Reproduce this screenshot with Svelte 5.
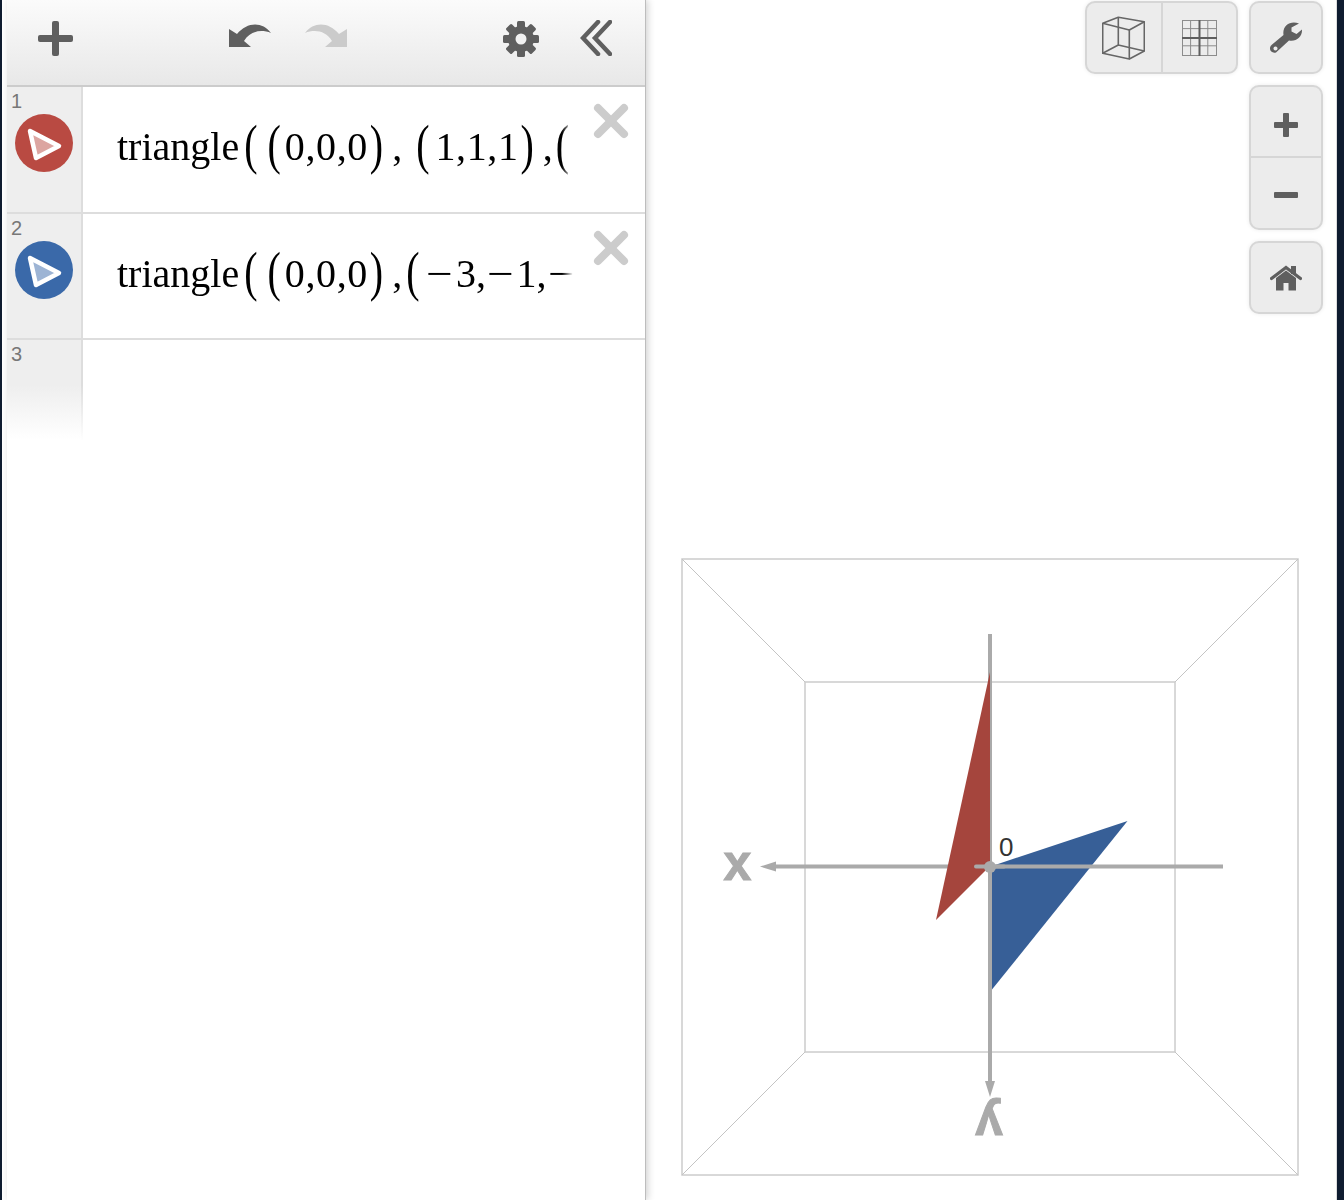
<script>
	const teeth = [0, 45, 90, 135, 180, 225, 270, 315];
	const minor = [8.6, 25.8];
</script>

<div class="page">
	<aside class="sidebar">
		<header class="bar">
			<svg class="plus" viewBox="0 0 35 35" width="35" height="35">
				<rect x="14" y="0" width="7" height="35" rx="2" />
				<rect x="0" y="14" width="35" height="7" rx="2" />
			</svg>
			<svg class="undo" viewBox="229 24 42 23" width="42" height="23">
				<path d="M229 47 L229 29 L237 34 C247 22 262 21 271 33 C261 29 250 31 244 41 L251 47 Z" />
			</svg>
			<svg class="redo" viewBox="229 24 42 23" width="42" height="23">
				<path d="M229 47 L229 29 L237 34 C247 22 262 21 271 33 C261 29 250 31 244 41 L251 47 Z" />
			</svg>
			<svg class="gear" viewBox="0 0 36 36" width="36" height="36">
				<circle cx="18" cy="18" r="13" />
				{#each teeth as deg}
					<rect x="14" y="0" width="8" height="9" rx="1.5" transform="rotate({deg} 18 18)" />
				{/each}
				<circle class="hole" cx="18" cy="18" r="5.5" />
			</svg>
			<svg class="collapse" viewBox="0 0 32 36" width="32" height="36">
				<polyline points="18,2 3,18 18,34" />
				<polyline points="30,2 15,18 30,34" />
			</svg>
		</header>

		<div class="row top-row">
			<div class="gutter">
				<span class="num">1</span>
				<svg class="badge" viewBox="0 0 58 58" width="58" height="58">
					<circle cx="29" cy="29" r="29" fill="#b94a42" />
					<polygon points="15,17 44,32 21,44" />
				</svg>
			</div>
			<div class="cell">
				<div class="math">
					<span>triangle</span><span class="paren first">(</span><span class="paren">(</span><span class="nums">0,0,0</span><span class="paren close">)</span><span class="comma">,</span><span class="paren wide">(</span><span class="nums">1,1,1</span><span class="paren close">)</span><span class="comma">,</span><span class="paren last">(</span>
				</div>
				<svg class="remove" viewBox="0 0 36 36" width="36" height="36">
					<line x1="5" y1="5" x2="31" y2="31" />
					<line x1="31" y1="5" x2="5" y2="31" />
				</svg>
			</div>
		</div>

		<div class="row">
			<div class="gutter">
				<span class="num">2</span>
				<svg class="badge" viewBox="0 0 58 58" width="58" height="58">
					<circle cx="29" cy="29" r="29" fill="#3a69a9" />
					<polygon points="15,17 44,32 21,44" />
				</svg>
			</div>
			<div class="cell">
				<div class="math">
					<span>triangle</span><span class="paren first">(</span><span class="paren">(</span><span class="nums">0,0,0</span><span class="paren close">)</span><span class="comma">,</span><span class="paren open">(</span><span class="op">−</span><span>3,</span><span class="op">−</span><span>1,</span><span class="op">−</span>
				</div>
				<svg class="remove" viewBox="0 0 36 36" width="36" height="36">
					<line x1="5" y1="5" x2="31" y2="31" />
					<line x1="31" y1="5" x2="5" y2="31" />
				</svg>
			</div>
		</div>

		<div class="row empty">
			<div class="gutter">
				<span class="num">3</span>
			</div>
		</div>
	</aside>

	<main class="graph">
		<div class="tools">
			<div class="tool-row">
				<div class="group horizontal">
					<button class="tool wide-tool" aria-label="3D view">
						<svg viewBox="1102 16 43 44" width="43" height="44" class="line-icon">
							<path d="M1102.7 23.3 L1118.3 17.3 L1144.3 21.7 L1129.3 30 Z" />
							<path d="M1102.7 23.3 V53.3 L1129.3 59 V30" />
							<path d="M1144.3 21.7 V51 L1129.3 59" />
							<path d="M1118.3 17.3 V45 L1102.7 53.3 M1118.3 45 L1144.3 51" />
						</svg>
					</button>
					<button class="tool wide-tool" aria-label="Grid">
						<svg viewBox="0 0 35 36" width="35" height="36">
							{#each minor as m}
								<line class="thin" x1={m} y1="0" x2={m} y2="36" />
								<line class="thin" x1="0" y1={m} x2="35" y2={m} />
							{/each}
							<rect class="thin" x="0.5" y="0.5" width="34" height="35" />
							<line class="thick" x1="17.5" y1="0" x2="17.5" y2="36" />
							<line class="thick" x1="0" y1="18" x2="35" y2="18" />
						</svg>
					</button>
				</div>
				<div class="group">
					<button class="tool" aria-label="Settings">
						<svg viewBox="1269 21 34 33" width="34" height="33">
							<path fill-rule="evenodd" d="M1299 23.5 C1291 20 1282 25 1283.5 35 L1271.5 45 C1268 48.5 1271 54 1276 52.5 L1289 40.5 C1296 42 1302.5 37 1302 29.5 L1296.5 34 L1291.5 31.5 L1291.5 27.5 Z M1275.5 46.5 a2 2 0 1 0 0.01 0 Z" />
						</svg>
					</button>
				</div>
			</div>
			<div class="group">
				<button class="tool zoom-in" aria-label="Zoom in">
					<svg viewBox="0 0 24 24" width="24" height="24">
						<rect x="9" y="0" width="6" height="24" rx="1" />
						<rect x="0" y="9" width="24" height="6" rx="1" />
					</svg>
				</button>
				<button class="tool divided" aria-label="Zoom out">
					<svg viewBox="0 0 24 6" width="24" height="6">
						<rect x="0" y="0" width="24" height="6" rx="1" />
					</svg>
				</button>
			</div>
			<div class="group">
				<button class="tool" aria-label="Home">
					<svg viewBox="0 0 32 26" width="32" height="26">
						<rect x="21" y="1" width="5" height="8" />
						<polyline class="roof" points="1.5,13.5 16,2.5 30.5,13.5" />
						<path d="M6 13 L16 5.5 L26 13 V25.5 H18.5 V18 H13.5 V25.5 H6 Z" />
					</svg>
				</button>
			</div>
		</div>

		<svg class="plot" viewBox="680 557 620 620" width="620" height="620">
			<rect class="box" x="682" y="559" width="616" height="616" />
			<rect class="box" x="805" y="682" width="370" height="370" />
			<line class="diag" x1="682" y1="559" x2="805" y2="682" />
			<line class="diag" x1="1298" y1="559" x2="1175" y2="682" />
			<line class="diag" x1="682" y1="1175" x2="805" y2="1052" />
			<line class="diag" x1="1298" y1="1175" x2="1175" y2="1052" />

			<line class="axis" x1="990" y1="866.5" x2="775" y2="866.5" />
			<polygon class="tip" points="760,866.5 776,861.5 776,871.5" />
			<line class="axis" x1="990" y1="634" x2="990" y2="1082" />
			<polygon fill="#a5453d" points="990,672 990,866 936,920" />
			<polygon fill="#375f97" points="1127.5,821 992,989.5 992,866" />
			<line class="axis" x1="990" y1="866.5" x2="1223" y2="866.5" />
			<polygon class="tip" points="990,1097 985,1081 995,1081" />
			<line class="tick" x1="976" y1="866.5" x2="1004" y2="866.5" />
			<circle class="tip" cx="990" cy="867" r="6" />

			<text class="origin" x="999" y="856">0</text>
			<text class="label" x="737.5" y="880" text-anchor="middle">x</text>
			<text class="label" transform="rotate(180 989 1118)" x="989" y="1128" text-anchor="middle">y</text>
		</svg>
	</main>
</div>

<style>
	:global(body) {
		margin: 0;
		background: #fff;
	}
	.page {
		height: 1200px;
		display: flex;
		overflow: hidden;
		box-sizing: border-box;
		border-left: 2px solid #0f1c30;
		border-right: 7px solid #0f1c30;
		background: #fff;
		font-family: "Liberation Sans", Arial, sans-serif;
	}
	.sidebar {
		width: 639px;
		margin-left: 5px;
		flex: none;
		box-sizing: border-box;
		border-right: 1px solid #bdbdbd;
		box-shadow: 2px 0 7px rgba(0, 0, 0, 0.18);
		background: #fff;
		position: relative;
		z-index: 1;
	}
	.bar {
		height: 87px;
		box-sizing: border-box;
		border-bottom: 2px solid #ccc;
		background: linear-gradient(#fbfbfb, #e8e8e8);
		display: flex;
		align-items: flex-start;
		padding-left: 31px;
	}
	.bar svg {
		flex: none;
		fill: #5f5f5f;
	}
	.plus {
		margin-top: 21px;
	}
	.undo {
		margin: 24px 0 0 156px;
	}
	.redo {
		margin: 24px 0 0 34px;
		transform: scaleX(-1);
		fill: #cbcbcb !important;
	}
	.gear {
		margin: 21px 0 0 156px;
	}
	.gear .hole {
		fill: #f1f1f1;
	}
	.collapse {
		margin: 20px 0 0 41px;
	}
	.collapse polyline {
		fill: none;
		stroke: #5f5f5f;
		stroke-width: 4.5;
		stroke-linecap: round;
	}
	.row {
		height: 126px;
		box-sizing: border-box;
		border-bottom: 2px solid #ddd;
		display: flex;
	}
	.top-row {
		height: 127px;
	}
	.gutter {
		width: 76px;
		flex: none;
		box-sizing: border-box;
		border-right: 2px solid #ddd;
		background: #eee;
		position: relative;
	}
	.num {
		position: absolute;
		left: 4px;
		top: 3px;
		font-size: 20px;
		line-height: 23px;
		color: #777;
	}
	.badge {
		position: absolute;
		left: 8px;
		top: 27px;
	}
	.badge polygon {
		fill: rgba(255, 255, 255, 0.5);
		stroke: #fff;
		stroke-width: 4.5;
		stroke-linejoin: round;
	}
	.cell {
		flex: 1;
		position: relative;
		min-width: 0;
	}
	.math {
		position: absolute;
		left: 34px;
		top: 30px;
		width: 456px;
		height: 66px;
		line-height: 60px;
		overflow: hidden;
		white-space: nowrap;
		font-family: "Liberation Serif", "Times New Roman", serif;
		font-size: 40px;
		color: #000;
		mask-image: linear-gradient(to right, #000 445px, transparent 456px);
	}
	.paren {
		display: inline-block;
		transform: translateY(-2px) scaleY(1.36);
	}
	.first {
		margin-left: 5px;
		margin-right: 10px;
	}
	.close {
		margin-left: 2px;
	}
	.comma {
		margin-left: 9px;
	}
	.wide {
		margin-left: 14px;
		margin-right: 2px;
	}
	.open {
		margin-left: 4px;
	}
	.last {
		margin-left: 3px;
	}
	.nums {
		margin-left: 4px;
		letter-spacing: 0.6px;
	}
	.op {
		display: inline-block;
		margin: 0 5px 0 3px;
		transform: scaleX(1.18);
	}
	.open + .op {
		margin-left: 9px;
	}
	.remove {
		position: absolute;
		right: 16px;
		top: 16px;
	}
	.remove line {
		stroke: #ccc;
		stroke-width: 8;
		stroke-linecap: round;
	}
	.empty {
		height: 100px;
		border-bottom: 0;
	}
	.empty .gutter {
		height: 100px;
		background: linear-gradient(#eee 45%, #fff);
		border-image: linear-gradient(#ddd 45%, #fff) 1;
	}
	.graph {
		flex: 1;
		position: relative;
		min-width: 0;
		border-right: 1px solid #ddd;
	}
	.plot {
		display: block;
		margin: 557px 0 0 34px;
	}
	.box {
		fill: none;
		stroke: #ccc;
		stroke-width: 1.5;
	}
	.diag {
		stroke: #c4c4c4;
		stroke-width: 1;
	}
	.axis {
		stroke: #aaa;
		stroke-width: 4;
	}
	.tick {
		stroke: #aaa;
		stroke-width: 4;
		stroke-linecap: round;
	}
	.tip {
		fill: #aaa;
	}
	.origin {
		font-size: 26px;
		fill: #333;
	}
	.label {
		font-size: 50px;
		font-weight: 700;
		fill: #aaa;
		stroke: #aaa;
		stroke-width: 1;
	}
	.tools {
		position: absolute;
		top: 1px;
		right: 13px;
		display: flex;
		flex-direction: column;
		align-items: flex-end;
		gap: 11px;
	}
	.tool-row {
		display: flex;
		gap: 11px;
	}
	.group {
		display: flex;
		flex-direction: column;
		box-sizing: border-box;
		width: 74px;
		border: 2px solid #d6d6d6;
		border-radius: 10px;
		background: #ececec;
		box-shadow: 0 0 4px rgba(0, 0, 0, 0.08);
		overflow: hidden;
	}
	.horizontal {
		flex-direction: row;
		width: 153px;
	}
	.tool {
		width: 70px;
		height: 69px;
		padding: 0;
		border: 0;
		background: none;
		display: flex;
		align-items: center;
		justify-content: center;
	}
	.tool svg {
		fill: #5f5f5f;
	}
	.zoom-in {
		padding-top: 6px;
	}
	.divided {
		border-top: 2px solid #d6d6d6;
		height: 72px;
		padding-top: 4px;
	}
	.wide-tool {
		width: 75px;
		flex: none;
	}
	.wide-tool:first-child {
		width: 74px;
		padding-right: 2px;
	}
	.wide-tool + .wide-tool {
		border-left: 2px solid #d6d6d6;
	}
	.line-icon path {
		fill: none;
		stroke: #666;
		stroke-width: 1.6;
		stroke-linejoin: round;
	}
	.thin {
		fill: none;
		stroke: #8c8c8c;
		stroke-width: 1;
	}
	.thick {
		stroke: #5f5f5f;
		stroke-width: 2;
	}
	.roof {
		fill: none;
		stroke: #5f5f5f;
		stroke-width: 3.2;
		stroke-linecap: round;
	}
</style>
